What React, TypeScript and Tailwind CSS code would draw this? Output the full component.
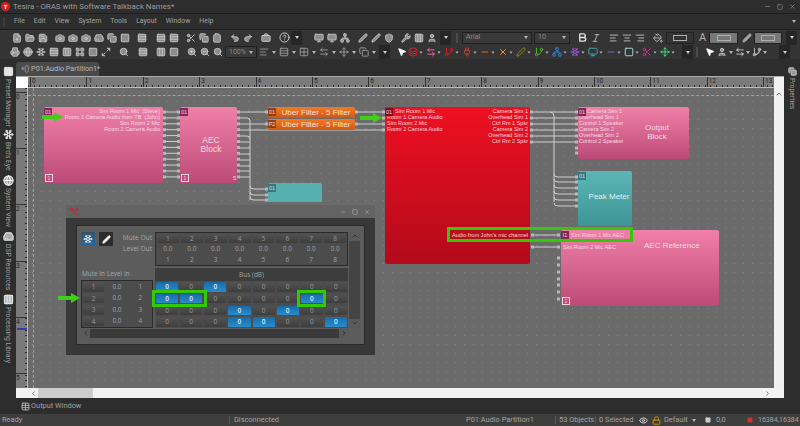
import {
  AlignCenter, AlignLeft, AlignRight, ArrowLeftRight, Bold, Briefcase, Camera, ChevronDown, ChevronLeft, ChevronRight, ChevronUp,
  CircleHelp, Clipboard, Columns3, Copy, Eye, FilePlus, FolderOpen, Globe, Grid2x2, HardDrive, Italic, LayoutGrid, Layers,
  Lock, Minus, Monitor, MousePointer2, Move, Network, PaintBucket, Pen, Plug, Printer, Redo2, Rows3, Save, Scissors, Shield,
  Snowflake, Square, SquareTerminal, Table, Undo2, User, Wrench, X, ZoomIn, ZoomOut, Search, Maximize2, GitBranch,
} from "lucide-react";
import type { ReactNode } from "react";

type Ic = typeof Save;

function Tools({ items, className = "" }: { items: Ic[]; className?: string }) {
  return (
    <div className={`flex items-center shrink-0 ${className}`}>
      {items.map((I, i) => (
        <span key={i} className="w-[13px] flex justify-center">
          <I size={10} strokeWidth={2} className="text-[#cfcfcf] fill-[#8c8c8c]" />
        </span>
      ))}
    </div>
  );
}

function Caret({ className = "" }: { className?: string }) {
  return <span className={`w-0 h-0 border-x-[2.5px] border-x-transparent border-t-[3px] border-t-[#b5b5b5] shrink-0 ${className}`} />;
}

function DarkCaret({ className = "" }: { className?: string }) {
  return (
    <span className={`w-[11px] h-[14px] bg-[#262626] flex items-center justify-center shrink-0 ${className}`}>
      <Caret className="border-t-[#d0d0d0]" />
    </span>
  );
}

function Combo({ text, className }: { text: string; className: string }) {
  return (
    <div className={`h-[12px] flex items-center justify-between px-[3px] bg-[#3a3a3a] border border-[#1f1f1f] text-[7px] text-[#8a8a8a] shrink-0 ${className}`}>
      <span>{text}</span>
      <Caret />
    </div>
  );
}

function Swatch({ className }: { className: string }) {
  return (
    <div className={`h-[12px] flex items-center justify-center shrink-0 border border-[#222] ${className}`}>
      <span className="w-[14px] h-[6px] border border-[#b0b0b0]" />
    </div>
  );
}

const colored: { I: Ic; c: string }[] = [
  { I: Layers, c: "text-[#d8272e]" },
  { I: ArrowLeftRight, c: "text-[#e56aa5]" },
  { I: GitBranch, c: "text-[#d41f2a]" },
  { I: Plug, c: "text-[#c9472c]" },
  { I: Minus, c: "text-[#e0661f]" },
  { I: X, c: "text-[#e8982b]" },
  { I: Pen, c: "text-[#8f8a1d]" },
  { I: GitBranch, c: "text-[#55b22e]" },
  { I: Network, c: "text-[#2f86d8]" },
  { I: Snowflake, c: "text-[#9a55c9]" },
  { I: Monitor, c: "text-[#3ba0a6]" },
  { I: Minus, c: "text-[#7a6bd0]" },
  { I: Square, c: "text-[#9ad3d3]" },
  { I: Scissors, c: "text-[#c2318c]" },
  { I: Move, c: "text-[#3fdc7c]" },
];

function TitleBar() {
  return (
    <div className="h-[13px] flex items-center border-b border-[#1e1e1e] bg-[#2d2d2d] shrink-0 box-content">
      <span className="ml-[1px] w-[9px] h-[9px] rounded-full bg-[#d81e1e] text-white text-[6px] leading-[9px] text-center font-bold">T</span>
      <span className="ml-[3px] text-[7.9px] text-[#9c9c9c]">Tesira - ORAS with Software Talkback Names*</span>
      <div className="ml-auto flex items-center gap-[6px] pr-[4px] text-[#9a9a9a]">
        <Minus size={7} />
        <Square size={6} />
        <X size={7} />
      </div>
    </div>
  );
}

function MenuBar() {
  return (
    <div className="h-[16px] flex items-center border-b border-[#202020] text-[6.9px] text-[#a2a2a2] shrink-0">
      <span className="ml-[3px] w-[2px] h-[10px] bg-[#3c3c3c]" />
      <div className="ml-[9px] flex gap-[9px]">
        <span>File</span><span>Edit</span><span>View</span><span>System</span><span>Tools</span><span>Layout</span><span>Window</span><span>Help</span>
      </div>
      <Caret className="ml-auto mr-[4px]" />
    </div>
  );
}

function ToolbarOne() {
  return (
    <div className="h-[15px] flex items-center pl-[10px] shrink-0 bg-[#343434]">
      <Tools items={[FilePlus, FolderOpen, Save]} />
      <Tools items={[Camera, Camera, Camera, HardDrive, Copy, SquareTerminal]} className="ml-[4px]" />
      <Tools items={[Table]} className="ml-[4px]" />
      <Tools items={[Rows3, Table]} className="ml-[6px]" />
      <Tools items={[Scissors, Copy, Clipboard]} className="ml-[4px]" />
      <Tools items={[Undo2, Redo2]} className="ml-[5px]" />
      <Tools items={[Briefcase]} className="ml-[5px]" />
      <CircleHelp size={11} className="ml-[7px] text-[#d0d0d0] shrink-0" />
      <DarkCaret className="ml-[1px]" />
      <Tools items={[Monitor, Monitor, Network]} className="ml-[10px]" />
      <Tools items={[Pen, Pen, Shield]} className="ml-[5px]" />
      <Tools items={[Wrench, Columns3, User]} className="ml-[4px]" />
      <DarkCaret className="ml-[2px]" />
      <span className="ml-[5px] w-[2px] h-[10px] bg-[#4c4c4c]" />
      <Combo text="Arial" className="ml-[4px] w-[70px]" />
      <Combo text="10" className="ml-[2px] w-[36px]" />
      <Bold size={11} strokeWidth={3} className="ml-[7px] text-[#e4e4e4] shrink-0" />
      <Italic size={10} className="ml-[3px] text-[#c4c4c4] shrink-0" />
      <Tools items={[AlignLeft, AlignCenter, AlignRight]} className="ml-[6px]" />
      <PaintBucket size={10} className="ml-[7px] text-[#c4c4c4] shrink-0" />
      <Swatch className="ml-[3px] w-[28px] bg-[#333]" />
      <span className="ml-[5px] text-[11px] leading-none text-[#b0b0b0]">A</span>
      <Swatch className="ml-[3px] w-[29px] bg-[#777]" />
      <Pen size={10} className="ml-[4px] text-[#a8a8a8] fill-[#a8a8a8] shrink-0" />
      <Swatch className="ml-[2px] w-[28px] bg-[#777]" />
      <DarkCaret className="ml-[4px]" />
    </div>
  );
}

function ToolbarTwo() {
  return (
    <div className="h-[14px] flex items-center pl-[8px] shrink-0 bg-[#343434]">
      <Tools items={[Printer, Globe, Snowflake, Rows3, Columns3, LayoutGrid, Square, Maximize2]} />
      <Tools items={[Search]} className="ml-[5px]" />
      <Tools items={[Rows3]} className="ml-[6px]" />
      <Tools items={[Columns3, Grid2x2]} className="ml-[5px]" />
      <Tools items={[ZoomIn, ZoomOut, Search]} className="ml-[5px]" />
      <Combo text="100%" className="ml-[1px] w-[32px]" />
      <div className="ml-[2px] flex items-center gap-[3px]">
        {[AlignLeft, Rows3, Grid2x2, ArrowLeftRight, Move, Copy].map((I, i) => (
          <span key={i} className="flex items-center gap-[3px]">
            <I size={10} className="text-[#a5a5a5]" />
            <Caret className="border-t-[#7c7c7c]" />
          </span>
        ))}
      </div>
      <DarkCaret className="ml-[3px]" />
      <MousePointer2 size={10} className="ml-[7px] text-white fill-white shrink-0" />
      <div className="ml-[-1px] flex items-center">
        {colored.map(({ I, c }, i) => (
          <span key={i} className="w-[18px] flex items-center justify-center gap-[1px] shrink-0">
            <I size={10} strokeWidth={2.4} className={c} />
            <Caret className="scale-75" />
          </span>
        ))}
      </div>
      <DarkCaret className="ml-[6px]" />
      <span className="ml-[3px] w-[2px] h-[10px] bg-[#4c4c4c]" />
      <MousePointer2 size={10} className="ml-[7px] text-white fill-white shrink-0" />
      <Tools items={[User]} />
      <Caret className="ml-[1px]" />
      <Tools items={[ArrowLeftRight]} />
      <Caret />
      <Tools items={[GitBranch]} />
      <Caret />
      <DarkCaret className="ml-[12px]" />
    </div>
  );
}

function SideItem({ icon, label, className }: { icon: ReactNode; label: string; className: string }) {
  return (
    <div className={`flex flex-col items-center shrink-0 ${className}`}>
      {icon}
      <span className="[writing-mode:vertical-rl] text-[6.8px] leading-none mt-[2px] text-[#9f9f9f] whitespace-nowrap">{label}</span>
    </div>
  );
}

function LeftRail() {
  return (
    <div className="w-[16px] shrink-0 pt-[7px] flex flex-col">
      <SideItem className="h-[63px]" icon={<Grid2x2 size={11} className="shrink-0 text-[#e4e4e4] fill-[#e4e4e4]" />} label="Preset Manager" />
      <SideItem className="h-[46px]" icon={<Snowflake size={11} strokeWidth={2.6} className="shrink-0 text-[#e4e4e4]" />} label="Bird's Eye" />
      <SideItem className="h-[56px]" icon={<Globe size={11} strokeWidth={2.4} className="shrink-0 text-[#f0f0f0] fill-[#999]" />} label="System View" />
      <SideItem className="h-[63px]" icon={<HardDrive size={11} strokeWidth={2.4} className="shrink-0 text-[#e4e4e4] fill-[#aaa]" />} label="DSP Resources" />
      <SideItem className="h-[63px]" icon={<Columns3 size={11} strokeWidth={2.4} className="shrink-0 text-[#e4e4e4] fill-[#bbb]" />} label="Processing Library" />
    </div>
  );
}

const hNums = [0, 1, 2, 3, 4, 5, 6, 7, 8, 9, 10, 11, 12, 13];
const vNums = [0, 1, 2, 3, 4, 5];

function HRuler() {
  return (
    <div className="h-[11px] flex-1 min-w-0 bg-[#7a7a7a] flex pl-[2px] overflow-hidden relative border-b border-[#bdbdbd]">
      <div className="absolute inset-x-0 bottom-0 h-[2px] bg-[repeating-linear-gradient(90deg,#2f2f2f_0,#2f2f2f_1px,transparent_1px,transparent_5.64px)]" />
      {hNums.map((n) => (
        <div key={n} className="w-[56.4px] shrink-0 border-l border-[#333] text-[6.5px] leading-[8px] pl-[1px] text-[#222]">{n}</div>
      ))}
    </div>
  );
}

function VRuler() {
  return (
    <div className="w-[12px] shrink-0 bg-[#7a7a7a] pt-[4px] overflow-hidden relative border-r border-[#bdbdbd]">
      <div className="absolute inset-y-0 right-0 w-[2px] bg-[repeating-linear-gradient(180deg,#2f2f2f_0,#2f2f2f_1px,transparent_1px,transparent_5.62px)]" />
      <span className="absolute left-[1px] right-0 top-[240px] h-[2px] bg-[#3b3bb0]" />
      {vNums.map((n) => (
        <div key={n} className="h-[56.2px] border-t border-[#333] text-[6.5px] leading-[8px] text-[#222]">{n}</div>
      ))}
    </div>
  );
}

function Badge({ text = "01", className = "bg-[#7d2a55]" }: { text?: string; className?: string }) {
  return (
    <span className={`absolute left-0 top-[1px] w-[8px] h-[8px] text-[5.5px] leading-[8px] text-center text-[#f1d7e2] ${className}`}>{text}</span>
  );
}

function Corner({ n = "1" }: { n?: string }) {
  return <span className="absolute left-[1px] bottom-[1px] w-[8px] h-[8px] border border-[#f3d5e0] text-[5px] leading-[6px] text-center text-[#f3d5e0]">{n}</span>;
}

const pinsPink = ["Sim Room 1 Mic  (Steve)", "Room 1 Camera Audio from TB  (John)", "Sim Room 2 Mic", "Room 2 Camera Audio"];
const pinsRedIn = ["Sim Room 1 Mic", "Room 1 Camera Audio", "Sim Room 2 Mic", "Room 2 Camera Audio"];
const pinsRedOut = ["Camera Sim 1", "Overhead Sim 1", "Ctrl Rm 1 Spkr", "Camera Sim 2", "Overhead Sim 2", "Ctrl Rm 2 Spkr"];
const pinsOut = ["Camera Sim 1", "Overhead Sim 1", "Control 1 Speaker", "Camera Sim 2", "Overhead Sim 2", "Control 2 Speaker"];

const rows12 = Array.from({ length: 12 }, (_, i) => 112 + i * 5.9);

function Pin({ x, y }: { x: number; y: number }) {
  return <rect x={x} y={y - 1.5} width="3" height="3" fill="#b8b8b8" />;
}

function Wires() {
  const w = { stroke: "#cfcfcf", strokeWidth: 1, fill: "none" };
  const redOut = [112, 118, 124, 130, 136, 142];
  const peak = [177, 182, 188, 194, 200, 206];
  return (
    <svg className="absolute left-0 top-0 w-[746px] h-[300px]" viewBox="28 88 746 300">
      {rows12.map((y) => (
        <g key={y}>
          <line x1="165" y1={y} x2="178" y2={y} {...w} />
          <Pin x={163} y={y} />
          <Pin x={177} y={y} />
          <Pin x={237} y={y} />
        </g>
      ))}
      <path d="M240 112H266M240 124H266M240 118H247Q250 118 250 121V200M240 130H385" {...w} />
      <path d="M240 136H247Q250 136 250 139M240 142H250M240 148H250M240 154H250M240 160H250M240 166H250M240 171H250M240 177H250" {...w} />
      <path d="M250 186Q250 189 254 189H266M250 192Q250 195 254 195H266M250 197Q250 200 254 200H266" {...w} />
      <Pin x={265} y={189} /><Pin x={265} y={195} /><Pin x={265} y={200} />
      <Pin x={265} y={112} /><Pin x={265} y={124} />
      <path d="M355 112H383M355 124H383" {...w} />
      {[112, 118, 124, 130].map((y) => <Pin key={y} x={382} y={y} />)}
      {[112, 124].map((y) => <Pin key={y} x={355} y={y} />)}
      {redOut.map((y) => (
        <g key={y}>
          <line x1="532" y1={y} x2="576" y2={y} {...w} />
          <Pin x={530} y={y} />
          <Pin x={575} y={y} />
        </g>
      ))}
      <Pin x={575} y={148} /><Pin x={575} y={153} />
      <path d="M550 112Q554 112 554 116V202" {...w} />
      {peak.map((y) => (
        <g key={y}>
          <path d={`M554 ${y - 3}Q554 ${y} 558 ${y}H576`} {...w} />
          <Pin x={575} y={y} />
        </g>
      ))}
      <path d="M533 235H558M533 247H558" {...w} />
      <Pin x={531} y={235} /><Pin x={531} y={247} />
      {[235, 247, 258, 265, 272, 279, 285, 292, 299].map((y) => <Pin key={y} x={557} y={y} />)}
    </svg>
  );
}

function GreenArrow({ className }: { className: string }) {
  return (
    <svg className={`absolute ${className}`} viewBox="0 0 22 10">
      <path d="M0 3H13V0L22 5L13 10V7H0Z" fill="#3fd016" />
    </svg>
  );
}

function Blocks() {
  return (
    <div className="absolute inset-0 font-['Liberation_Sans',sans-serif]">
      <div className="absolute left-[16px] top-[19px] w-[119px] h-[76px] rounded-[2px] bg-gradient-to-b from-[#f080a8] to-[#bc4a78]">
        <Badge />
        <div className="mt-[2px] pr-[3px] text-right text-[5.5px] leading-[5.9px] text-[#f6dbe5] whitespace-pre">
          {pinsPink.map((p) => <div key={p}>{p}</div>)}
        </div>
        <Corner />
      </div>
      <div className="absolute left-[152px] top-[19px] w-[57px] h-[76px] rounded-[2px] bg-gradient-to-b from-[#f080a8] to-[#bc4a78] flex items-center justify-center">
        <Badge />
        <div className="text-[8.5px] leading-[9.5px] text-center text-[#f6dbe5] pl-[5px]">AEC<br />Block</div>
        <Corner />
        <span className="absolute right-[1px] bottom-[1px] text-[5.5px] leading-[7px] text-[#f3d5e0]">5</span>
      </div>
      {["01", "P2"].map((t, i) => (
        <div key={t} className={`absolute left-[240px] w-[87px] h-[11px] rounded-[2px] bg-gradient-to-b from-[#f27a28] to-[#d4560f] flex items-center justify-center pl-[9px] text-[8px] text-[#f8e0cf] ${i === 0 ? "top-[19px]" : "top-[31px]"}`}>
          <Badge text={t} className="bg-[#93400f]" />
          Uber Filter - 5 Filter
        </div>
      ))}
      <div className="absolute left-[240px] top-[95px] w-[54px] h-[19px] rounded-t-[2px] bg-[#56b0b0]">
        <Badge className="bg-[#2e7a7d]" />
      </div>
      <div className="absolute left-[357px] top-[19px] w-[145px] h-[157px] rounded-[2px] bg-gradient-to-b from-[#ee1022] to-[#b30a1a]">
        <Badge className="bg-[#8a0a16]" />
        <div className="flex justify-between mt-[2px] px-[2px] text-[5.5px] leading-[5.9px] text-[#f8d9da]">
          <div>
            {pinsRedIn.map((p, i) => <div key={p} className={i === 0 ? "pl-[8px]" : ""}>{p}</div>)}
          </div>
          <div className="text-right">
            {pinsRedOut.map((p) => <div key={p}>{p}</div>)}
          </div>
        </div>
        <span className="absolute right-[2px] top-[125px] text-[5.6px] leading-[6px] text-[#f8d9da] whitespace-nowrap">Audio from John's mic channel</span>
      </div>
      <div className="absolute left-[550px] top-[19px] w-[111px] h-[52px] rounded-[2px] bg-gradient-to-b from-[#f080a8] to-[#bc4a78]">
        <Badge />
        <div className="mt-[2px] text-[5.5px] leading-[5.9px] text-[#f6dbe5] pl-[1px]">
          {pinsOut.map((p, i) => <div key={p} className={i === 0 ? "pl-[8px]" : ""}>{p}</div>)}
        </div>
        <div className="absolute left-[61px] top-[16px] w-[36px] text-center text-[8px] leading-[9px] text-[#f6dbe5]">Output<br />Block</div>
      </div>
      <div className="absolute left-[550px] top-[83px] w-[54px] h-[55px] rounded-[2px] bg-gradient-to-b from-[#5cb6b6] to-[#3f9595] flex items-center justify-center pl-[8px]">
        <Badge className="bg-[#2e7a7d]" />
        <span className="text-[8px] text-[#dff1f1] whitespace-nowrap -mt-[3px]">Peak Meter</span>
      </div>
      <div className="absolute left-[533px] top-[142px] w-[158px] h-[76px] rounded-[2px] bg-gradient-to-b from-[#f080a8] to-[#bc4a78]">
        <Badge className="bg-[#7d2a55]" text="I1" />
        <div className="mt-[2px] pl-[2px] text-[5.5px] text-[#f6dbe5] leading-[6px]">
          <div className="pl-[8px]">Sim Room 1 Mic AEC</div>
          <div className="mt-[6px]">Sim Room 2 Mic AEC</div>
        </div>
        <span className="absolute left-[83px] top-[10px] text-[8px] text-[#f6dbe5] whitespace-nowrap">AEC Reference</span>
        <Corner />
      </div>
      <span className="absolute left-[419px] top-[139px] w-[186px] h-[15px] border-[3px] border-[#34c906]" />
      <GreenArrow className="left-[14px] top-[24px] w-[21px] h-[10px]" />
      <GreenArrow className="left-[332px] top-[25px] w-[22px] h-[10px]" />
    </div>
  );
}

const matrix = [
  [1, 0, 1, 0, 0, 0, 0, 0],
  [1, 1, 0, 0, 0, 0, 1, 0],
  [0, 0, 0, 1, 0, 1, 0, 0],
  [0, 0, 0, 1, 1, 0, 0, 1],
];
const eight = [1, 2, 3, 4, 5, 6, 7, 8];

function Btn({ on, children, className = "" }: { on?: boolean; children: ReactNode; className?: string }) {
  return (
    <div className={`h-[9.5px] rounded-[1px] text-center text-[6.5px] leading-[9.5px] ${on ? "bg-gradient-to-b from-[#1a6aa8] to-[#2a8ccc] text-[#d8eefc] font-semibold" : "bg-gradient-to-b from-[#525252] to-[#3e3e3e] text-[#9a9a9a]"} ${className}`}>
      {children}
    </div>
  );
}

function MatrixWindow() {
  return (
    <div className="absolute left-[38px] top-[117px] w-[309px] h-[150px] bg-[#636363] flex flex-col font-['Open_Sans',sans-serif]">
      <div className="h-[13px] flex items-center px-[3px] shrink-0">
        <Scissors size={10} className="text-[#c8202a] rotate-90" />
        <div className="ml-auto flex gap-[6px] pr-[2px] text-[#bdbdbd]">
          <Minus size={6} />
          <Square size={6} />
          <X size={6} />
        </div>
      </div>
      <div className="flex-1 bg-[#383838] px-[10px] pt-[7px] pb-[10px]">
        <div className="h-full bg-[#5c5c5c] border border-[#2a2a2a] pl-[4px] pt-[6px] relative">
          <div className="flex gap-[1px]">
            <div className="w-[73px] shrink-0">
              <div className="flex gap-[4px]">
                <span className="w-[14px] h-[14px] rounded-[1px] bg-gradient-to-b from-[#33516b] to-[#1d6aa5] flex items-center justify-center">
                  <Snowflake size={10} className="text-white" />
                </span>
                <span className="w-[14px] h-[14px] rounded-[1px] bg-[#2c2c2c] flex items-center justify-center">
                  <Pen size={9} className="text-white fill-white" />
                </span>
              </div>
              <div className="-mt-[14px] text-right pr-[2px] text-[6.6px] text-[#a9a9a9] leading-[11px]">
                <div>Mute Out</div>
                <div>Level Out</div>
              </div>
              <div className="mt-[16px] pl-[1px] flex gap-[2px] text-[6.4px] leading-[8px] text-[#a9a9a9]">
                <span>Mute In</span><span>Level In</span>
              </div>
              <div className="mt-[2px] h-[48px] w-[72px] border border-[#2a2a2a] grid grid-rows-4 text-[6.5px] text-[#a0a0a0] bg-[#4c4c4c]">
                {[1, 2, 3, 4].map((n) => (
                  <div key={n} className="grid grid-cols-3 items-center text-center">
                    <Btn className="mx-[1px]">{n}</Btn>
                    <span>0.0</span>
                    <span>{n}</span>
                  </div>
                ))}
              </div>
            </div>
            <div className="w-[193px] shrink-0 relative">
              <div className="border border-[#2a2a2a] bg-[#4c4c4c] text-[6.5px] text-[#a0a0a0] text-center h-[34px] grid grid-rows-3">
                <div className="grid grid-cols-8 items-center">
                  {eight.map((n) => <Btn key={n} className="mx-[1px]">{n}</Btn>)}
                </div>
                <div className="grid grid-cols-8 items-center">
                  {eight.map((n) => <span key={n}>0.0</span>)}
                </div>
                <div className="grid grid-cols-8 items-center">
                  {eight.map((n) => <span key={n}>{n}</span>)}
                </div>
              </div>
              <div className="mt-[2px] h-[13px] bg-[#3d3d3d] text-center text-[6.5px] leading-[13px] text-[#a0a0a0]">Bus (dB)</div>
              <div className="h-[47px] grid grid-rows-4 bg-[#4c4c4c]">
                {matrix.map((row, r) => (
                  <div key={r} className="grid grid-cols-8 items-center">
                    {row.map((c, i) => <Btn key={i} on={c === 1} className="mx-[1px]">0</Btn>)}
                  </div>
                ))}
              </div>
              <span className="absolute -left-[3px] top-[58px] w-[55px] h-[17px] border-[3px] border-[#34c906]" />
              <span className="absolute left-[142px] top-[58px] w-[29px] h-[17px] border-[3px] border-[#34c906]" />
            </div>
            <div className="w-[11px] h-[96px] bg-[#444] flex flex-col justify-between shrink-0">
              <span className="h-[9px] bg-[#5a5a5a] flex justify-center"><ChevronUp size={8} className="text-[#222]" /></span>
              <span className="h-[9px] bg-[#5a5a5a] flex justify-center"><ChevronDown size={8} className="text-[#222]" /></span>
            </div>
          </div>
          <div className="mt-[1px] w-[267px] h-[9px] bg-[#3a3a3a] flex justify-between">
            <span className="w-[9px] bg-[#5a5a5a] flex justify-center"><ChevronLeft size={8} className="text-[#222]" /></span>
            <span className="w-[9px] bg-[#5a5a5a] flex justify-center"><ChevronRight size={8} className="text-[#222]" /></span>
          </div>
        </div>
      </div>
      <GreenArrow className="-left-[8px] top-[88px] w-[22px] h-[10px]" />
    </div>
  );
}

function Canvas() {
  return (
    <div className="flex-1 min-w-0 relative overflow-hidden bg-[#6b6b6b] bg-[radial-gradient(#858585_0.5px,transparent_0.6px)] bg-[length:9px_9px]">
      <span className="absolute left-[5px] top-0 bottom-0 border-l border-dashed border-[#8ab08a]" />
      <span className="absolute left-0 right-0 top-[7px] border-t border-dashed border-[#8ab08a]" />
      <Wires />
      <Blocks />
      <MatrixWindow />
    </div>
  );
}

function Workspace() {
  return (
    <div className="flex-1 min-w-0 flex flex-col">
      <div className="h-[17px] flex items-end shrink-0">
        <div className="w-[83px] h-[14px] bg-[#4a4a4a] rounded-t-[3px] pl-[5px] text-[7.2px] leading-[14px] text-[#b8b8b8] whitespace-nowrap">«() P01:Audio Partition1*</div>
      </div>
      <div className="flex-1 min-h-0 flex flex-col border-t border-[#aaa]">
        <div className="flex shrink-0">
          <div className="w-[12px] h-[11px] bg-white shrink-0" />
          <HRuler />
          <div className="w-[10px] h-[11px] bg-[#f2f2f2] shrink-0" />
        </div>
        <div className="flex-1 min-h-0 flex">
          <VRuler />
          <Canvas />
          <div className="w-[10px] bg-[#f0f0f0] shrink-0 flex justify-center pt-[2px]">
            <ChevronUp size={8} className="text-[#333]" />
          </div>
        </div>
        <div className="h-[10px] bg-[#f2f2f2] flex items-center shrink-0">
          <ChevronLeft size={7} className="ml-[14px] text-[#333]" />
          <span className="ml-[1px] w-[55px] h-full bg-[#cdcdcd]" />
          <ChevronRight size={7} className="ml-auto mr-[13px] text-[#333]" />
        </div>
      </div>
    </div>
  );
}

function RightRail() {
  return (
    <div className="w-[16px] shrink-0 flex flex-col items-center pt-[8px]">
      <Copy size={9} className="text-[#ddd] fill-[#999]" />
      <span className="[writing-mode:vertical-rl] mt-[2px] text-[6.8px] leading-none text-[#9f9f9f]">Properties</span>
    </div>
  );
}

function StatusBar() {
  return (
    <div className="h-[12px] bg-[#3e3e3e] flex items-center text-[7.4px] text-[#a4a4a4] shrink-0 whitespace-nowrap">
      <span className="ml-[2px] w-[227px]">Ready</span>
      <span className="w-px h-[8px] bg-[#555]" />
      <span className="ml-[4px] w-[232px]">Disconnected</span>
      <span className="w-[89px]">P01:Audio Partition1</span>
      <span className="w-px h-[8px] bg-[#555]" />
      <span className="ml-[3px] w-[36px]">53 Objects</span>
      <span className="w-px h-[8px] bg-[#555]" />
      <span className="ml-[3px] w-[40px]">0 Selected</span>
      <Eye size={9} className="text-white shrink-0" />
      <Lock size={9} className="ml-[4px] text-[#e7a800] shrink-0" />
      <span className="ml-[3px] w-[23px]">Default</span>
      <Caret className="ml-[5px]" />
      <Square size={6} className="ml-[9px] text-[#ccc] fill-[#ccc] shrink-0" />
      <span className="ml-[5px] w-[31px]">0,0</span>
      <Square size={6} className="text-[#c33] fill-[#c33] shrink-0" />
      <span className="ml-[5px] text-[7px]">16384,16384</span>
    </div>
  );
}

export default function App() {
  return (
    <div className="w-[800px] h-[426px] overflow-hidden bg-[#2d2d2d] flex flex-col font-['Roboto',sans-serif]">
      <TitleBar />
      <MenuBar />
      <ToolbarOne />
      <ToolbarTwo />
      <div className="flex-1 min-h-0 flex">
        <LeftRail />
        <Workspace />
        <RightRail />
      </div>
      <div className="h-[16px] flex items-center pl-[21px] shrink-0 text-[7.4px] text-[#a0a0a0]">
        <Table size={9} className="text-[#ccc]" />
        <span className="ml-[1px]">Output Window</span>
      </div>
      <StatusBar />
    </div>
  );
}
